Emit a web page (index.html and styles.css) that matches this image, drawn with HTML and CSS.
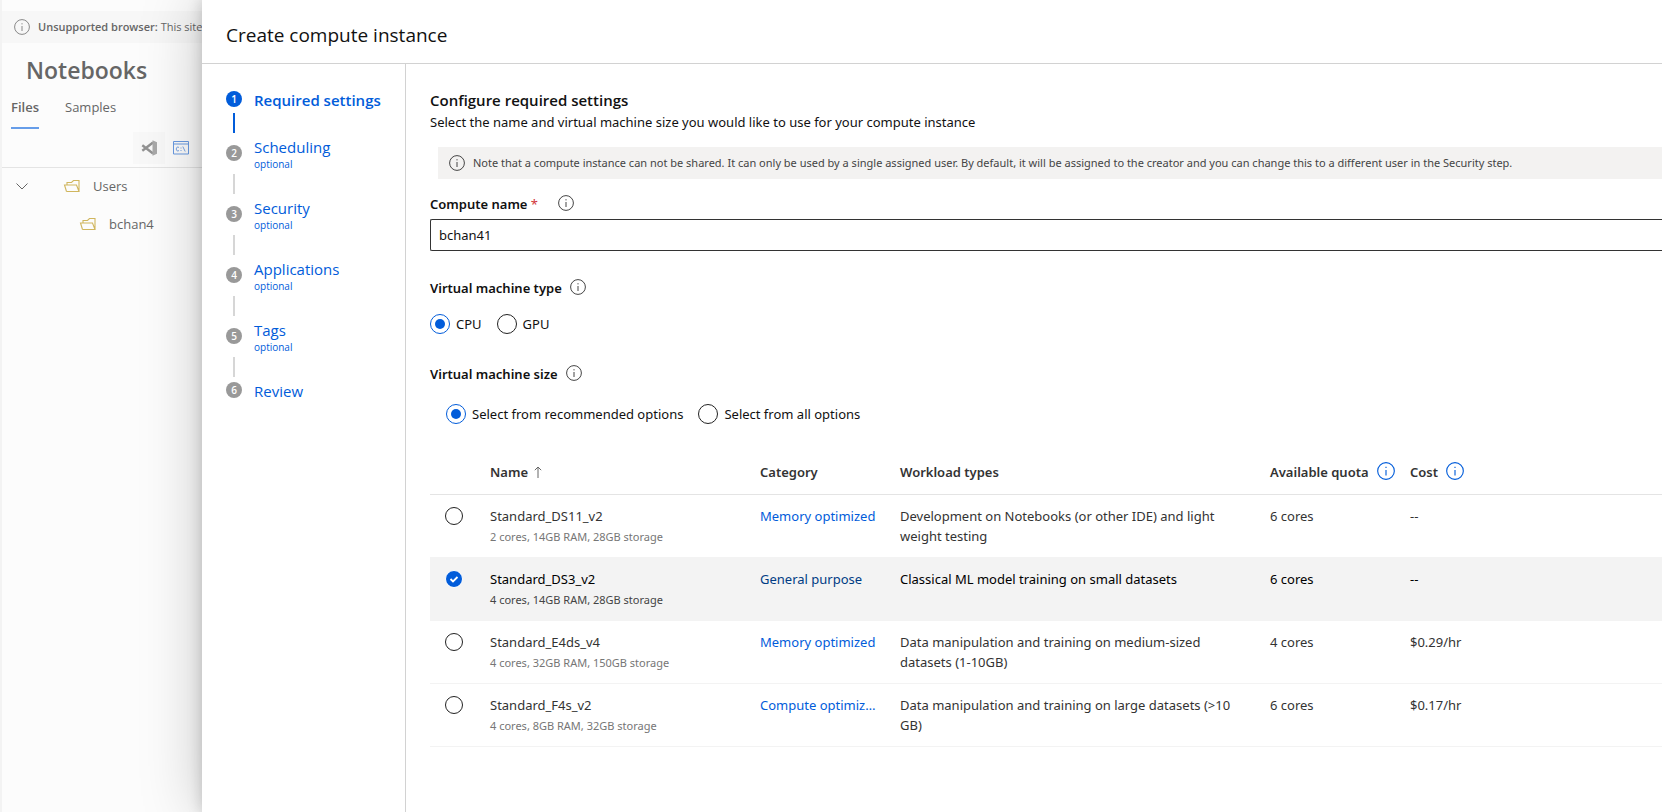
FILE: index.html
```html
<!DOCTYPE html>
<html lang="en">
<head>
    <meta charset="UTF-8">
    <meta name="viewport" content="width=device-width, initial-scale=1.0">
    <title>Create compute instance</title>
    <link rel="stylesheet" href="styles.css">
</head>
<body>

<!-- shared icons -->
<svg class="sprite" aria-hidden="true">
    <symbol id="info" viewBox="0 0 16 16">
        <circle cx="8" cy="8" r="7.4" fill="none" stroke="currentColor"/>
        <path d="M8 7v5M8 4.2v1.2" fill="none" stroke="currentColor"/>
    </symbol>
    <symbol id="folder" viewBox="0 0 18 14">
        <path d="M3.500 12.500L1.500 6H4V3.500h4.500L10.500 1.500H16v11M3.500 12.500H16L13.500 6H4" fill="none" stroke="currentColor" stroke-width="1.100"/>
    </symbol>
</svg>

<div class="layout">
    <div class="page">
        <div class="banner">
            <svg class="icon"><use href="#info"/></svg>
            <span><b>Unsupported browser:</b> This site</span>
        </div>
        <h1 class="page-title">Notebooks</h1>
        <div class="tabs">
            <button class="tab active" type="button">Files</button>
            <button class="tab" type="button">Samples</button>
        </div>
        <div class="toolbar">
            <button class="tool vscode" type="button" aria-label="Open in VS Code">
                <svg width="16" height="16" viewBox="0 0 16 16">
                    <path d="M1.300 5.300L12 13.500M1.300 10.700L12 2.500" fill="none" stroke="#929292" stroke-width="2.400"/>
                    <path d="M11.500.3L16 2.300v11.400l-4.500 2z" fill="#a8a8a8"/>
                </svg>
            </button>
            <button class="tool" type="button" aria-label="Open terminal">
                <svg width="16" height="14" viewBox="0 0 16 14" fill="none" stroke="#6a9be2">
                    <path d="M.5.5h15v12.500H.5zM.5 3h15"/>
                    <path d="M6 6.500C4.500 5.300 3.300 6.300 3.300 8s1.200 2.700 2.700 1.500M8 6.500v1M8 9v1M9.800 5.500l2.400 5" stroke-width=".9"/>
                </svg>
            </button>
        </div>
        <ul class="tree">
            <li class="tree-item">
                <svg class="chevron" width="12" height="7" viewBox="0 0 12 7"><path d="M.5.5L6 6 11.500.5" fill="none" stroke="currentColor"/></svg>
                <svg class="folder"><use href="#folder"/></svg>
                <span>Users</span>
            </li>
            <li class="tree-item child">
                <svg class="folder"><use href="#folder"/></svg>
                <span>bchan4</span>
            </li>
        </ul>
    </div>

    <div class="panel" role="dialog" aria-labelledby="panelTitle">
        <div class="panel-header">
            <h2 id="panelTitle">Create compute instance</h2>
        </div>
        <div class="panel-body">
            <nav class="steps">
                <a class="step current" href="#"><span class="num">1</span><span class="step-text">Required settings</span></a>
                <div class="line current"></div>
                <a class="step" href="#"><span class="num">2</span><span class="step-text">Scheduling<small>optional</small></span></a>
                <div class="line"></div>
                <a class="step" href="#"><span class="num">3</span><span class="step-text">Security<small>optional</small></span></a>
                <div class="line"></div>
                <a class="step" href="#"><span class="num">4</span><span class="step-text">Applications<small>optional</small></span></a>
                <div class="line"></div>
                <a class="step" href="#"><span class="num">5</span><span class="step-text">Tags<small>optional</small></span></a>
                <div class="line"></div>
                <a class="step" href="#"><span class="num">6</span><span class="step-text">Review</span></a>
            </nav>

            <form class="settings">
                <h3>Configure required settings</h3>
                <p class="intro">Select the name and virtual machine size you would like to use for your compute instance</p>

                <div class="note">
                    <svg class="icon"><use href="#info"/></svg>
                    <span>Note that a compute instance can not be shared. It can only be used by a single assigned user. By default, it will be assigned to the creator and you can change this to a different user in the Security step.</span>
                </div>

                <div class="field-label name-label">
                    <label for="computeName">Compute name <span class="required">*</span></label>
                    <button class="info" type="button" aria-label="About compute name"><svg class="icon"><use href="#info"/></svg></button>
                </div>
                <input class="text-input" type="text" id="computeName" name="computeName" value="bchan41" required>

                <div class="field-label type-label">
                    <span id="vmType">Virtual machine type</span>
                    <button class="info" type="button" aria-label="About machine type"><svg class="icon"><use href="#info"/></svg></button>
                </div>
                <div class="radios" role="radiogroup" aria-labelledby="vmType">
                    <label class="radio"><input type="radio" name="type" value="cpu" checked> CPU</label>
                    <label class="radio"><input type="radio" name="type" value="gpu"> GPU</label>
                </div>

                <div class="field-label size-label">
                    <span id="vmSize">Virtual machine size</span>
                    <button class="info" type="button" aria-label="About machine size"><svg class="icon"><use href="#info"/></svg></button>
                </div>
                <div class="radios size-radios" role="radiogroup" aria-labelledby="vmSize">
                    <label class="radio"><input type="radio" name="options" value="recommended" checked> Select from recommended options</label>
                    <label class="radio"><input type="radio" name="options" value="all"> Select from all options</label>
                </div>

                <table class="sizes">
                    <colgroup>
                        <col class="col-check">
                        <col class="col-name">
                        <col class="col-category">
                        <col class="col-workload">
                        <col class="col-quota">
                        <col>
                    </colgroup>
                    <thead>
                        <tr>
                            <th></th>
                            <th><div class="th name-th">Name <svg width="8" height="12" viewBox="0 0 8 12"><path d="M4 12V1M.8 4.200L4 1l3.200 3.200" fill="none" stroke="#666"/></svg></div></th>
                            <th><div class="th">Category</div></th>
                            <th><div class="th">Workload types</div></th>
                            <th><div class="th">Available quota <button class="info blue" type="button" aria-label="About quota"><svg class="icon"><use href="#info"/></svg></button></div></th>
                            <th><div class="th">Cost <button class="info blue" type="button" aria-label="About cost"><svg class="icon"><use href="#info"/></svg></button></div></th>
                        </tr>
                    </thead>
                    <tbody>
                        <tr>
                            <td><input type="radio" name="size" value="ds11" id="ds11"></td>
                            <td><label for="ds11">Standard_DS11_v2<small>2 cores, 14GB RAM, 28GB storage</small></label></td>
                            <td class="category"><a href="#">Memory optimized</a></td>
                            <td>Development on Notebooks (or other IDE) and light weight testing</td>
                            <td>6 cores</td>
                            <td>--</td>
                        </tr>
                        <tr class="selected">
                            <td><input type="radio" name="size" value="ds3" id="ds3" checked></td>
                            <td><label for="ds3">Standard_DS3_v2<small>4 cores, 14GB RAM, 28GB storage</small></label></td>
                            <td class="category"><a href="#">General purpose</a></td>
                            <td>Classical ML model training on small datasets</td>
                            <td>6 cores</td>
                            <td>--</td>
                        </tr>
                        <tr>
                            <td><input type="radio" name="size" value="e4ds" id="e4ds"></td>
                            <td><label for="e4ds">Standard_E4ds_v4<small>4 cores, 32GB RAM, 150GB storage</small></label></td>
                            <td class="category"><a href="#">Memory optimized</a></td>
                            <td>Data manipulation and training on medium-sized datasets (1-10GB)</td>
                            <td>4 cores</td>
                            <td>$0.29/hr</td>
                        </tr>
                        <tr>
                            <td><input type="radio" name="size" value="f4s" id="f4s"></td>
                            <td><label for="f4s">Standard_F4s_v2<small>4 cores, 8GB RAM, 32GB storage</small></label></td>
                            <td class="category"><a href="#">Compute optimized</a></td>
                            <td>Data manipulation and training on large datasets (&gt;10 GB)</td>
                            <td>6 cores</td>
                            <td>$0.17/hr</td>
                        </tr>
                    </tbody>
                </table>
            </form>
        </div>
    </div>
</div>

</body>
</html>
```

FILE: styles.css
```css
* {
    box-sizing: border-box;
}

body {
    margin: 0;
    font-family: "Segoe UI", "Open Sans", "Noto Sans", sans-serif;
    font-size: 13px;
    line-height: 20px;
    color: #111;
    background: #fff;
}

h1, h2, h3, p, ul {
    margin: 0;
    padding: 0;
}

button {
    font: inherit;
    color: inherit;
    background: none;
    border: none;
    padding: 0;
    cursor: pointer;
}

a {
    color: #015cda;
    text-decoration: none;
}

.sprite {
    display: none;
}

.icon {
    display: block;
    flex: none;
    width: 16px;
    height: 16px;
}

.layout {
    display: flex;
    min-height: 100vh;
    overflow: hidden;
}

/* page behind the panel */
.page {
    width: 202px;
    flex: none;
    overflow: hidden;
    padding-top: 11px;
    border-left: 2px solid #f3f3f3;
    background: #fcfcfc;
    color: #666;
}

.banner {
    display: flex;
    align-items: center;
    gap: 8px;
    height: 32px;
    padding-left: 12px;
    background: #f7f7f7;
    font-size: 11px;
    white-space: nowrap;
}

.banner .icon {
    color: #888;
}

.banner b {
    font-weight: 600;
}

.page-title {
    margin: 11px 0 0 24px;
    font-size: 23px;
    line-height: 32px;
    font-weight: 600;
}

.tabs {
    display: flex;
    gap: 26px;
    margin-top: 11px;
    padding-left: 9px;
}

.tab {
    height: 32px;
    padding-bottom: 10px;
    border-bottom: 2px solid transparent;
}

.tab.active {
    font-weight: 600;
    border-bottom-color: #669de9;
}

.toolbar {
    display: flex;
    justify-content: flex-end;
    height: 39px;
    padding: 3px 5px 0 0;
    border-bottom: 1px solid #e4e4e4;
}

.tool {
    display: flex;
    align-items: center;
    justify-content: center;
    width: 32px;
    height: 32px;
}

.vscode {
    background: #f8f8f8;
}

.tree {
    list-style: none;
}

.tree-item {
    display: flex;
    align-items: center;
    height: 38px;
    padding: 0 0 2px 14px;
}

.tree-item.child {
    padding-left: 77px;
}

.chevron {
    margin-right: 35px;
}

.folder {
    width: 18px;
    height: 14px;
    margin-right: 12px;
    color: #d0b65e;
}

/* panel */
.panel {
    display: flex;
    flex-direction: column;
    flex: 1;
    min-width: 0;
    background: #fff;
    box-shadow: 0 0 58px rgba(0, 0, 0, 0.22), 0 0 14px rgba(0, 0, 0, 0.18);
}

.panel-header {
    padding: 21px 24px 14px;
    border-bottom: 1px solid #d2d2d2;
}

.panel-header h2 {
    font-size: 19px;
    line-height: 28px;
    font-weight: 400;
}

.panel-body {
    display: flex;
    flex: 1;
}

.steps {
    width: 204px;
    flex: none;
    padding: 25px 0 0 24px;
    border-right: 1px solid #d2d2d2;
}

.step {
    display: flex;
    align-items: center;
    gap: 12px;
    font-size: 15px;
    line-height: 22px;
}

.step.current {
    font-weight: 600;
}

.step small {
    display: block;
    margin-bottom: 2px;
    font-size: 10px;
    line-height: 12px;
}

.num {
    width: 16px;
    height: 16px;
    margin-bottom: 2px;
    border-radius: 50%;
    background: #999;
    color: #fff;
    font-size: 10px;
    line-height: 16px;
    font-weight: 600;
    text-align: center;
}

.step.current .num,
.line.current {
    background: #015cda;
}

.line {
    width: 2px;
    height: 20px;
    margin: 2px 0 3px 7px;
    background: #d6d6d6;
}

.settings {
    flex: 1;
    min-width: 0;
    padding: 25px 0 40px 24px;
    font-family: "Segoe UI", "Noto Sans", sans-serif;
}

.settings h3 {
    font-family: "Segoe UI", "Open Sans", sans-serif;
    font-size: 15px;
    line-height: 22px;
    font-weight: 600;
}

.intro {
    margin-top: 1px;
}

.note {
    display: flex;
    align-items: center;
    gap: 8px;
    height: 32px;
    margin: 15px 0 0 8px;
    padding-left: 11px;
    background: #f3f2f1;
    color: #444;
    font-size: 11px;
    white-space: nowrap;
}

.field-label {
    display: flex;
    align-items: center;
    gap: 8px;
    font-weight: 600;
}

.required {
    color: #d13438;
    font-weight: 400;
}

.info {
    color: #444;
    margin-bottom: 2px;
}

.name-label {
    gap: 20px;
    margin-top: 15px;
}

.text-input {
    display: block;
    width: 100%;
    height: 32px;
    margin-top: 5px;
    padding: 0 8px;
    border: 1px solid #333;
    border-right: none;
    border-radius: 2px 0 0 2px;
    font: inherit;
    color: inherit;
}

.type-label {
    margin-top: 27px;
}

.radios {
    display: flex;
    gap: 15px;
    margin-top: 16px;
}

.radio {
    display: flex;
    align-items: center;
    gap: 6px;
}

.radio input,
.sizes input {
    appearance: none;
    flex: none;
    width: 20px;
    height: 20px;
    margin: 0;
    border: 1px solid #222;
    border-radius: 50%;
    background: #fff;
}

.radio input:checked {
    padding: 4px;
    border-color: #015cda;
    background: #015cda content-box;
}

.size-label {
    margin-top: 30px;
}

.size-radios {
    margin-top: 20px;
    padding-left: 16px;
}

/* machine sizes */
.sizes {
    width: 100%;
    margin-top: 25px;
    table-layout: fixed;
    border-collapse: separate;
    border-spacing: 0;
    color: #333;
}

.col-check {
    width: 60px;
}

.col-name {
    width: 270px;
}

.col-category {
    width: 140px;
}

.col-workload {
    width: 370px;
}

.col-quota {
    width: 140px;
}

.sizes th {
    height: 46px;
    padding: 0;
    border-bottom: 1px solid #e4e4e4;
    text-align: left;
    font-weight: 600;
}

.th {
    display: flex;
    align-items: center;
    gap: 8px;
    white-space: nowrap;
}

.name-th {
    gap: 6px;
}

.blue {
    color: #015cda;
}

.blue .icon {
    width: 18px;
    height: 18px;
}

.sizes td {
    height: 63px;
    padding: 11px 22px 9px 0;
    border-bottom: 1px solid #f3f3f3;
    vertical-align: top;
}

.sizes td:first-child {
    padding-left: 15px;
}

.sizes small {
    display: block;
    font-size: 11px;
    line-height: 22px;
    color: #767676;
}

.sizes input {
    display: block;
    width: 18px;
    height: 18px;
    margin-top: 1px;
}

.sizes input:checked {
    border: 1px solid #fff;
    background: #015cda url("data:image/svg+xml,%3Csvg xmlns='http://www.w3.org/2000/svg' viewBox='0 0 14 14'%3E%3Cpath d='M3.500 7l2.500 2.500L10.500 5' fill='none' stroke='white' stroke-width='1.800'/%3E%3C/svg%3E") center / 14px no-repeat;
}

.category a {
    display: block;
    overflow: hidden;
    white-space: nowrap;
    text-overflow: ellipsis;
}

.selected td {
    background: #f3f3f3;
    color: #000;
}

.selected small {
    color: #444;
}

.selected a {
    color: #003c84;
}
```
